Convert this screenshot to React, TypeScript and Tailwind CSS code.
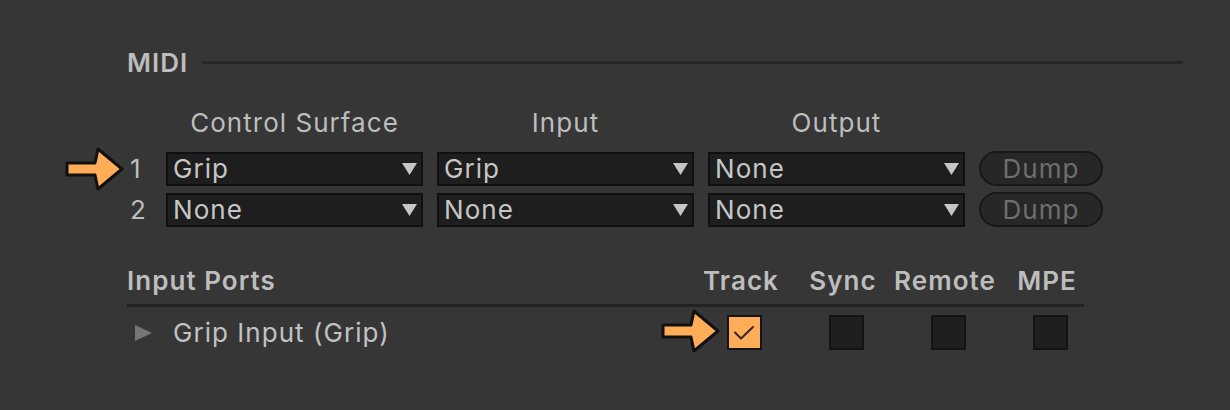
import React from "react";

const font = { fontFamily: "Inter, 'Noto Sans', sans-serif" };

function Arrow({ className }: { className: string }) {
  return (
    <svg
      className={className}
      width="60"
      height="44"
      viewBox="0 0 60 44"
      fill="none"
    >
      <path
        d="M2 16 L30 16 L33 2 L57 22 L33 42 L30 28 L2 28 Z"
        fill="#ffad58"
        stroke="#111"
        strokeWidth="3"
        strokeLinejoin="round"
      />
    </svg>
  );
}

function Select({ value }: { value: string }) {
  return (
    <div className="w-[257px] h-[34px] flex items-center justify-between border-2 border-[#101010] bg-[#1e1e1e] pl-[5px] pr-[4px]">
      <span className="text-[26px] leading-none text-[#c6c6c6] tracking-[0.04em]">
        {value}
      </span>
      <svg width="15" height="12" viewBox="0 0 15 12">
        <path d="M0 0 H15 L7.5 12 Z" fill="#c6c6c6" />
      </svg>
    </div>
  );
}

function DumpButton() {
  return (
    <button className="w-[124px] h-[35px] rounded-full border-2 border-[#181818] bg-[#272727] flex items-center justify-center text-[26px] leading-none text-[#6e6e6e] tracking-[0.04em]">
      Dump
    </button>
  );
}

function Check({ checked = false }: { checked?: boolean }) {
  return (
    <div
      className={
        checked
          ? "w-[35px] h-[35px] border-2 border-[#141414] bg-[#ffad58] flex items-center justify-center"
          : "w-[35px] h-[35px] border-2 border-[#141414] bg-[#1f1f1f]"
      }
    >
      {checked && (
        <svg width="22" height="16" viewBox="0 0 22 16" fill="none">
          <path
            d="M2 7.5 L8 13.5 L20 2"
            stroke="#2a2a2a"
            strokeWidth="2"
            strokeLinecap="round"
            strokeLinejoin="round"
          />
        </svg>
      )}
    </div>
  );
}

const rows = [
  { n: "1", surface: "Grip", input: "Grip", output: "None" },
  { n: "2", surface: "None", input: "None", output: "None" },
];

export default function App() {
  return (
    <div
      className="relative w-[1230px] h-[410px] bg-[#363636] pl-[127px] pr-[47px] pt-[50px] overflow-hidden"
      style={font}
    >
      {/* MIDI section */}
      <div className="flex items-center h-[25px]">
        <span className="text-[26px] leading-none font-semibold text-[#bdbdbd] tracking-[0.04em]">
          MIDI
        </span>
        <div className="flex-1 ml-[14px] h-[3px] bg-[#262626]" />
      </div>

      <div className="flex mt-[35px] h-[25px] items-center text-[26px] leading-none text-[#bdbdbd] tracking-[0.04em]">
        <div className="w-[39px]" />
        <div className="w-[257px] text-center">Control Surface</div>
        <div className="w-[14px]" />
        <div className="w-[257px] text-center">Input</div>
        <div className="w-[14px]" />
        <div className="w-[257px] text-center">Output</div>
      </div>

      <div className="flex flex-col gap-[6px] mt-[16px]">
        {rows.map((r) => (
          <div key={r.n} className="flex items-center gap-[14px]">
            <div className="w-[25px] pl-[3px] text-[26px] leading-none text-[#bdbdbd]">
              {r.n}
            </div>
            <Select value={r.surface} />
            <Select value={r.input} />
            <Select value={r.output} />
            <DumpButton />
          </div>
        ))}
      </div>

      {/* Input ports */}
      <div className="w-[957px] mt-[41px]">
        <div className="grid grid-cols-[566px_102px_102px_102px_102px] h-[25px] items-center text-[26px] leading-none font-semibold text-[#bdbdbd] tracking-[0.04em]">
          <div>Input Ports</div>
          <div className="text-center -ml-[6px]">Track</div>
          <div className="text-center -ml-[6px]">Sync</div>
          <div className="text-center -ml-[6px]">Remote</div>
          <div className="text-center -ml-[6px]">MPE</div>
        </div>
        <div className="mt-[11px] h-[3px] bg-[#232323]" />
        <div className="grid grid-cols-[566px_102px_102px_102px_102px] mt-[8px] h-[35px] items-center">
          <div className="flex items-center">
            <svg className="ml-[8px]" width="17" height="16" viewBox="0 0 17 16">
              <path d="M0 0 L17 8 L0 16 Z" fill="#767676" />
            </svg>
            <span className="ml-[21px] text-[26px] leading-none text-[#c2c2c2] tracking-[0.04em]">
              Grip Input (Grip)
            </span>
          </div>
          <div className="flex justify-center">
            <Check checked />
          </div>
          <div className="flex justify-center">
            <Check />
          </div>
          <div className="flex justify-center">
            <Check />
          </div>
          <div className="flex justify-center">
            <Check />
          </div>
        </div>
      </div>

      {/* annotation arrows */}
      <Arrow className="absolute left-[65px] top-[147px]" />
      <Arrow className="absolute left-[661px] top-[309px]" />
    </div>
  );
}
